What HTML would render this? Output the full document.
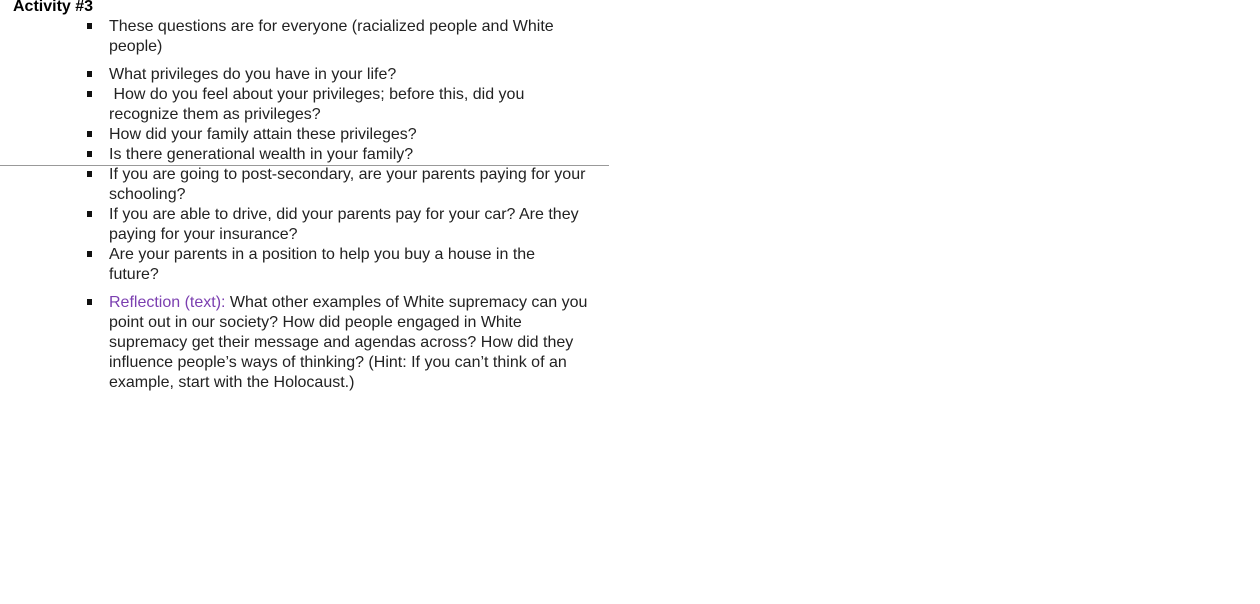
<!DOCTYPE html>
<html><head><meta charset="utf-8"><style>
body{margin:0;width:1260px;height:604px;background:#fff;position:relative;overflow:hidden;font-family:"Liberation Sans",Arial,sans-serif;font-size:16px;color:#222}
.l{position:absolute;left:109px;line-height:20px;white-space:nowrap}
.b{position:absolute;left:87px;width:5px;height:6px;background:#111}
.t{position:absolute;left:13px;top:-3px;font-weight:bold;line-height:20px;color:#000}
.hr{position:absolute;left:0;top:165px;width:609px;height:1px;background:#999}
.p{color:#7b3fb0}
</style></head><body>
<div class="t">Activity #3</div>
<div class="hr"></div>
<div class="b" style="top:23px"></div><div class="l" style="top:17px">These questions are for everyone (racialized people and White</div>
<div class="l" style="top:37px">people)</div>
<div class="b" style="top:71px"></div><div class="l" style="top:65px">What privileges do you have in your life?</div>
<div class="b" style="top:91px"></div><div class="l" style="top:85px">&nbsp;How do you feel about your privileges; before this, did you</div>
<div class="l" style="top:105px">recognize them as privileges?</div>
<div class="b" style="top:131px"></div><div class="l" style="top:125px">How did your family attain these privileges?</div>
<div class="b" style="top:151px"></div><div class="l" style="top:145px">Is there generational wealth in your family?</div>
<div class="b" style="top:171px"></div><div class="l" style="top:165px">If you are going to post-secondary, are your parents paying for your</div>
<div class="l" style="top:185px">schooling?</div>
<div class="b" style="top:211px"></div><div class="l" style="top:205px">If you are able to drive, did your parents pay for your car? Are they</div>
<div class="l" style="top:225px">paying for your insurance?</div>
<div class="b" style="top:251px"></div><div class="l" style="top:245px">Are your parents in a position to help you buy a house in the</div>
<div class="l" style="top:265px">future?</div>
<div class="b" style="top:299px"></div><div class="l" style="top:293px"><span class="p">Reflection (text):</span> What other examples of White supremacy can you</div>
<div class="l" style="top:313px">point out in our society? How did people engaged in White</div>
<div class="l" style="top:333px">supremacy get their message and agendas across? How did they</div>
<div class="l" style="top:353px">influence people’s ways of thinking? (Hint: If you can’t think of an</div>
<div class="l" style="top:373px">example, start with the Holocaust.)</div>
</body></html>
